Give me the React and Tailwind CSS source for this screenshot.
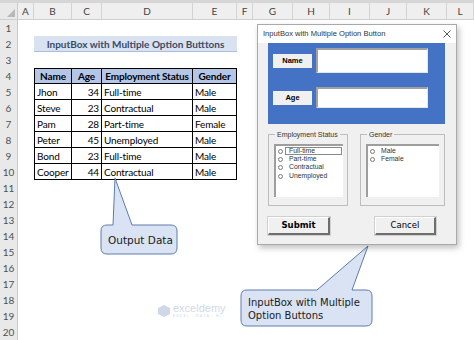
import React from "react";

const COLS =
  "grid grid-cols-[18px_16px_38px_30px_91px_44px_16px_40px_37px_40px_37px_40px_1fr]";

const letters = ["A", "B", "C", "D", "E", "F", "G", "H", "I", "J", "K", "L"];

const data = [
  ["Jhon", "34", "Full-time", "Male"],
  ["Steve", "23", "Contractual", "Male"],
  ["Pam", "28", "Part-time", "Female"],
  ["Peter", "45", "Unemployed", "Male"],
  ["Bond", "23", "Full-time", "Male"],
  ["Cooper", "44", "Contractual", "Male"],
];

function RowNum({ n }) {
  return (
    <div className="flex items-center justify-center bg-[#e9e9e9] border-r border-[#c9c9c9] text-[10px] text-[#505050] leading-none">
      {n}
    </div>
  );
}

function Radio({ label, focus }) {
  return (
    <div className="flex items-center h-[8.3px]">
      <span className="w-[5px] h-[5px] rounded-full border border-[#7a7a7a] bg-white shrink-0 ml-[2px]" />
      <span
        className={
          "ml-[2px] pl-[3px] flex-1 h-[8px] flex items-center text-[6.8px] text-[#333] leading-none whitespace-nowrap " +
          (focus ? "border border-[#888]" : "border border-transparent")
        }
      >
        {label}
      </span>
    </div>
  );
}

const cellBase =
  "flex items-center whitespace-nowrap overflow-hidden leading-none text-[10px] tracking-[-0.15px] text-black";

export default function App() {
  const rows = [];
  for (let n = 1; n <= 20; n++) {
    let content = null;
    if (n === 2) {
      content = (
        <div className="col-start-3 col-span-4 bg-[#d9e2f1] border-b border-[#a9bde0] flex items-center justify-center whitespace-nowrap leading-none text-[10px] font-bold text-[#3b4a63]">
          InputBox with Multiple Option Butttons
        </div>
      );
    } else if (n === 4) {
      content = (
        <>
          <div className={"col-start-3 bg-[#b4c6e7] border border-black justify-center font-bold " + cellBase}>
            Name
          </div>
          <div className={"bg-[#b4c6e7] border-t border-b border-r border-black justify-center font-bold " + cellBase}>
            Age
          </div>
          <div className={"bg-[#b4c6e7] border-t border-b border-r border-black justify-center font-bold " + cellBase}>
            Employment Status
          </div>
          <div className={"bg-[#b4c6e7] border-t border-b border-r border-black justify-center font-bold " + cellBase}>
            Gender
          </div>
        </>
      );
    } else if (n >= 5 && n <= 10) {
      const d = data[n - 5];
      content = (
        <>
          <div className={"col-start-3 border-l border-r border-b border-black pl-[2px] " + cellBase}>
            {d[0]}
          </div>
          <div className={"border-r border-b border-black justify-end pr-[2px] " + cellBase}>
            {d[1]}
          </div>
          <div className={"border-r border-b border-black pl-[2px] " + cellBase}>
            {d[2]}
          </div>
          <div className={"border-r border-b border-black pl-[2px] " + cellBase}>
            {d[3]}
          </div>
        </>
      );
    }
    rows.push(
      <div key={n} className={COLS + " h-4 overflow-hidden"}>
        <RowNum n={n} />
        {content}
      </div>
    );
  }

  return (
    <div className="relative w-[474px] h-[340px] overflow-hidden bg-white font-['Lato','Liberation_Sans',sans-serif]">
      <div className="h-[3px] bg-[#d6d6d6]" />
      {/* column headers */}
      <div className={COLS + " h-[17px] bg-[#efefef] border-b border-[#cfcfcf]"}>
        <div className="relative bg-[#e9e9e9] border-r border-[#c9c9c9]">
          <svg width="8" height="8" className="absolute right-[2px] bottom-[2px]">
            <polygon points="8,0 8,8 0,8" fill="#b8b8b8" />
          </svg>
        </div>
        {letters.map((l) => (
          <div
            key={l}
            className="flex items-center justify-center border-r border-[#d4d4d4] text-[10px] text-[#444] leading-none"
          >
            {l}
          </div>
        ))}
      </div>
      {rows}

      {/* callouts */}
      <svg
        className="absolute left-0 top-0 pointer-events-none"
        width="474"
        height="340"
      >
        <path
          d="M107,225 L113,225 L115,178 L132,225 L171,225 Q177,225 177,231 L177,248 Q177,254 171,254 L107,254 Q101,254 101,248 L101,231 Q101,225 107,225 Z"
          fill="#dae3f3"
          stroke="#5f7cad"
          strokeWidth="1"
        />
        <path
          d="M247,290 L317,290 L368,246 L352,290 L366,290 Q372,290 372,296 L372,320 Q372,326 366,326 L247,326 Q241,326 241,320 L241,296 Q241,290 247,290 Z"
          fill="#dae3f3"
          stroke="#5f7cad"
          strokeWidth="1"
        />
      </svg>
      <div className="absolute left-[108px] top-[235px] text-[10.5px] text-[#1a1a1a] font-['DejaVu_Sans',sans-serif] leading-none">
        Output Data
      </div>
      <div className="absolute left-[248px] top-[296px] text-[10px] text-[#1a1a1a] font-['DejaVu_Sans',sans-serif] leading-[13px]">
        InputBox with Multiple
        <br />
        Option Buttons
      </div>

      {/* watermark */}
      <div className="absolute left-[158px] top-[303px] flex items-center gap-[3px] opacity-40">
        <svg width="12" height="12" viewBox="0 0 12 12">
          <polygon points="6,0 12,3 12,9 6,12 0,9 0,3" fill="#8aa0c8" />
        </svg>
        <div className="flex flex-col leading-none">
          <span className="text-[11px] text-[#8aa0c8] font-['Liberation_Sans',sans-serif]">exceldemy</span>
          <span className="text-[4px] text-[#8aa0c8] tracking-[1px]">EXCEL · DATA · BI</span>
        </div>
      </div>

      {/* dialog */}
      <div className="absolute left-[257px] top-[24px] w-[200px] h-[221px] bg-[#f0f0f0] border border-[#a9a9a9] shadow-[2px_3px_6px_rgba(0,0,0,0.25)] flex flex-col font-['Liberation_Sans',sans-serif]">
        <div className="h-[18px] bg-white flex items-center justify-between pl-[5px] pr-[5px] shrink-0">
          <span className="text-[7.6px] text-[#333]">InputBox with Multiple Option Button</span>
          <svg width="8" height="8" viewBox="0 0 8 8">
            <path d="M0.5,0.5 L7.5,7.5 M7.5,0.5 L0.5,7.5" stroke="#444" strokeWidth="0.9" />
          </svg>
        </div>
        <div className="pl-[10px] pr-[11px] flex flex-col">
          <div className="w-[177px] h-[81px] bg-[#4472c4] flex flex-col pt-[5px]">
            <div className="flex items-center h-[25px]">
              <div className="ml-[5px] w-[39px] h-[14px] bg-[#f0f0f0] flex items-center justify-center text-[7.5px] font-bold text-black">
                Name
              </div>
              <div className="ml-[4px] w-[112px] h-[25px] bg-white border-t-2 border-l-2 border-[#a0a0a0] border-r border-b border-r-[#e6e6e6] border-b-[#e6e6e6]" />
            </div>
            <div className="flex items-center h-[21px] mt-[14px]">
              <div className="ml-[5px] w-[39px] h-[14px] bg-[#f0f0f0] flex items-center justify-center text-[7.5px] font-bold text-black">
                Age
              </div>
              <div className="ml-[4px] w-[112px] h-[21px] bg-white border-t-2 border-l-2 border-[#a0a0a0] border-r border-b border-r-[#e6e6e6] border-b-[#e6e6e6]" />
            </div>
          </div>

          <div className="flex gap-[12px] mt-[6px]">
            <fieldset className="w-[80px] h-[76px] border border-[#bdbdbd] m-0 p-0 pl-[5px]">
              <legend className="ml-[1px] px-[2px] text-[7px] text-[#333] leading-[9px]">
                Employment Status
              </legend>
              <div className="mt-[5px] w-[69px] h-[53px] bg-white border-t-2 border-l-2 border-[#9e9e9e] pt-[1px] pr-[1px]">
                <Radio label="Full-time" focus />
                <Radio label="Part-time" />
                <Radio label="Contractual" />
                <Radio label="Unemployed" />
              </div>
            </fieldset>
            <fieldset className="w-[85px] h-[76px] border border-[#bdbdbd] m-0 p-0 pl-[5px]">
              <legend className="ml-[1px] px-[2px] text-[7px] text-[#333] leading-[9px]">
                Gender
              </legend>
              <div className="mt-[5px] w-[73px] h-[53px] bg-white border-t-2 border-l-2 border-[#9e9e9e] pt-[1px] pr-[1px]">
                <Radio label="Male" />
                <Radio label="Female" />
              </div>
            </fieldset>
          </div>

          <div className="flex justify-between mt-[11px] pr-[9px]">
            <div className="w-[62px] h-[18px] bg-[#f0f0f0] border-t border-l border-white border-r-2 border-b-2 border-r-[#6e6e6e] border-b-[#6e6e6e] outline outline-1 outline-[#d0d0d0] flex items-center justify-center text-[8.5px] font-bold text-black font-['DejaVu_Sans',sans-serif]">
              Submit
            </div>
            <div className="w-[61px] h-[18px] bg-[#f0f0f0] border-t border-l border-white border-r-2 border-b-2 border-r-[#6e6e6e] border-b-[#6e6e6e] outline outline-1 outline-[#d0d0d0] flex items-center justify-center text-[8.5px] text-black font-['DejaVu_Sans',sans-serif]">
              Cancel
            </div>
          </div>
        </div>
      </div>
    </div>
  );
}
